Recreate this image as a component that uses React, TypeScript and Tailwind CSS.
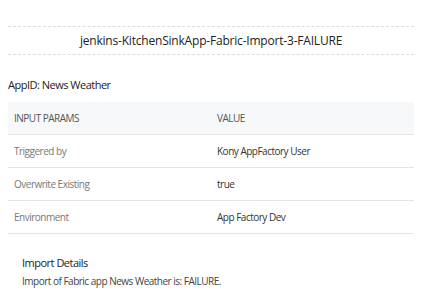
import React from "react";

const params = [
  { name: "Triggered by", value: "Kony AppFactory User" },
  { name: "Overwrite Existing", value: "true" },
  { name: "Environment", value: "App Factory Dev" },
];

export default function App() {
  return (
    <div
      className="h-[300px] w-[422px] overflow-hidden bg-white px-2 pt-[26px] text-[#333]"
      style={{ fontFamily: '"Open Sans", "Noto Sans", sans-serif' }}
    >
      <div className="flex h-[29px] items-center justify-center border-y border-dashed border-[#dcdcdc]">
        <span className="text-[12px] tracking-[-0.2px] text-[#222]">
          jenkins-KitchenSinkApp-Fabric-Import-3-FAILURE
        </span>
      </div>
      <div className="mt-[21px] text-[11px] leading-[18px] tracking-[-0.5px] text-[#222]">
        AppID: News Weather
      </div>
      <div className="mt-[8px] w-full">
        <div className="flex h-[33px] items-center border-b border-[#e4e4e4] bg-[#f7f8fa] text-[10px] tracking-[-0.5px] text-[#555]">
          <div className="w-1/2 pl-[6px]">INPUT PARAMS</div>
          <div className="w-1/2 pl-[6px]">VALUE</div>
        </div>
        {params.map((p) => (
          <div
            key={p.name}
            className="flex h-[33px] items-center border-b border-[#e4e4e4] text-[10px] tracking-[-0.5px]"
          >
            <div className="w-1/2 pl-[6px] text-[#777]">{p.name}</div>
            <div className="w-1/2 pl-[6px] text-[#333]">{p.value}</div>
          </div>
        ))}
      </div>
      <div className="mt-[20px] pl-[14px]">
        <div className="text-[11px] leading-[18px] tracking-[-0.5px] text-[#222]">Import Details</div>
        <div className="mt-[1px] text-[10px] leading-[16px] tracking-[-0.5px] text-[#444]">
          Import of Fabric app News Weather is: FAILURE.
        </div>
      </div>
    </div>
  );
}
